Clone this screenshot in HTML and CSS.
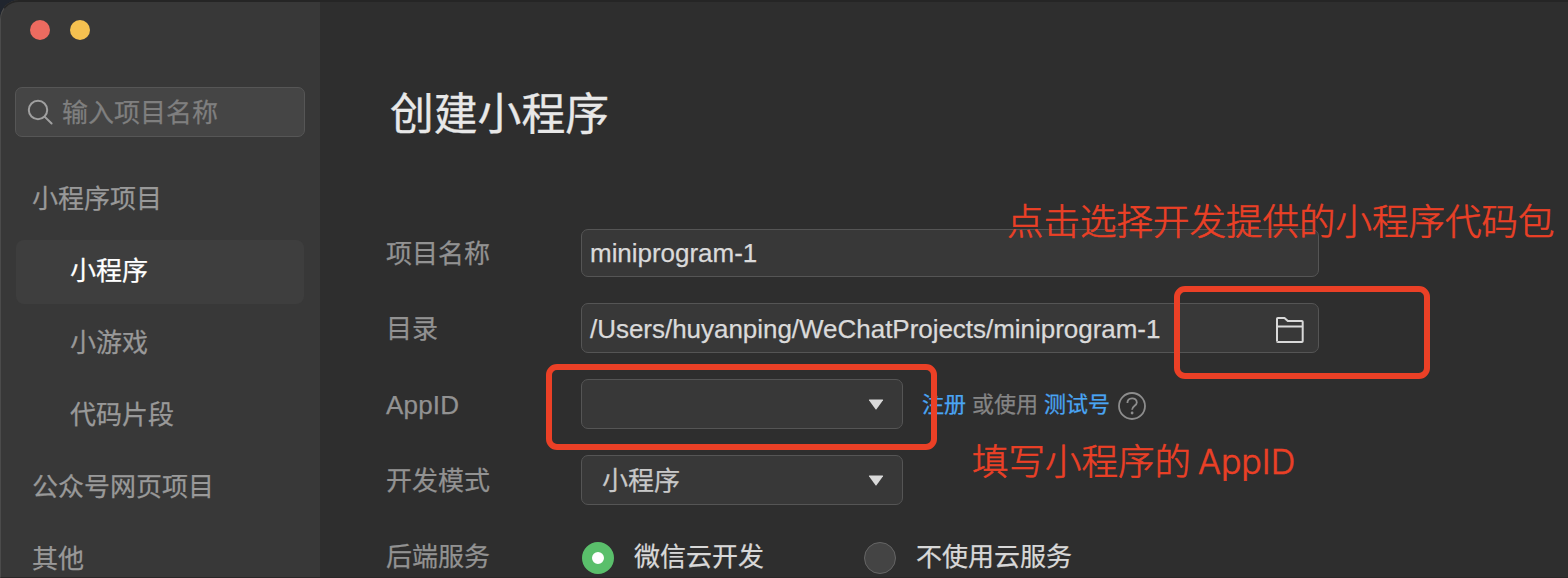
FILE: index.html
```html
<!DOCTYPE html>
<html lang="zh-CN">
<head>
<meta charset="utf-8">
<title>创建小程序</title>
<link rel="stylesheet" href="styles.css">
</head>
<body>
<div class="window">
  <aside class="sidebar">
    <div class="traffic"><span class="light close"></span><span class="light minimize"></span></div>
    <div class="search">
      <svg class="search-icon" width="28" height="28" viewBox="0 0 28 28"><circle cx="11" cy="12" r="9.2"/><path d="M17.6 18.6 24.6 25.5"/></svg>
      <span class="placeholder">输入项目名称</span>
    </div>
    <nav class="nav">
      <div class="nav-group">小程序项目</div>
      <div class="nav-item active">小程序</div>
      <div class="nav-item">小游戏</div>
      <div class="nav-item">代码片段</div>
      <div class="nav-group">公众号网页项目</div>
      <div class="nav-group">其他</div>
    </nav>
  </aside>
  <main class="main">
    <h1 class="title">创建小程序</h1>
    <div class="form">
      <div class="row name-row"><div class="label">项目名称</div><div class="field wide short"><span class="value">miniprogram-1</span></div></div>
      <div class="row"><div class="label">目录</div>
        <div class="field wide"><span class="value path">/Users/huyanping/WeChatProjects/miniprogram-1</span>
          <svg class="folder" width="30" height="28" viewBox="0 0 30 28"><path d="M2 25V2.8Q2 2 2.8 2H9.5L12.8 5H26.9Q27.7 5 27.7 5.8V25.2Q27.7 26 26.9 26H2.8Q2 26 2 25.2M2 10.6H27.7"/></svg>
        </div>
      </div>
      <div class="row"><div class="label latin">AppID</div>
        <div class="field select"><svg class="arrow" width="16" height="11" viewBox="0 0 16 11"><path d="M1.5.5h13q1 0 .5.8L8.5 10.3q-.5.6-1 0L1 1.3Q.5.5 1.5.5z"/></svg></div>
        <div class="hint"><a class="link">注册</a><span>或使用</span><a class="link">测试号</a>
          <svg class="help" width="28" height="28" viewBox="0 0 28 28"><circle cx="14" cy="14" r="13"/><path d="M9.4 11C9.4 4.9 18.8 4.9 18.8 10.4C18.8 13.7 14.1 13.9 14.1 17.8"/><circle class="dot" cx="14.1" cy="21" r="1.4"/></svg>
        </div>
      </div>
      <div class="row"><div class="label">开发模式</div>
        <div class="field select"><span class="mode">小程序</span><svg class="arrow" width="16" height="11" viewBox="0 0 16 11"><path d="M1.5.5h13q1 0 .5.8L8.5 10.3q-.5.6-1 0L1 1.3Q.5.5 1.5.5z"/></svg></div>
      </div>
      <div class="row"><div class="label">后端服务</div>
        <div class="option first"><span class="radio checked"></span><span>微信云开发</span></div>
        <div class="option"><span class="radio"></span><span>不使用云服务</span></div>
      </div>
    </div>
  </main>
  <div class="callout folder-callout"></div>
  <div class="callout appid-callout"></div>
  <div class="note folder-note">点击选择开发提供的小程序代码包</div>
  <div class="note appid-note">填写小程序的<span class="note-latin">AppID</span></div>
</div>
</body>
</html>
```
FILE: styles.css
```css
* { box-sizing: border-box; }
body {
  margin: 0;
  background: #20252e;
  font-family: "Liberation Sans", "Noto Sans CJK SC", sans-serif;
  font-size: 26px;
  line-height: 50px;
  overflow: hidden;
  -webkit-text-stroke: .25px;
}
.window {
  position: relative;
  display: flex;
  width: 1568px;
  height: 578px;
  overflow: hidden;
  white-space: nowrap;
  background: #2e2e2e;
  border-top-left-radius: 19px;
}
.window::after {
  content: "";
  position: absolute;
  inset: 0;
  border-top: 2px solid #252525;
  border-left: 1px solid #4b4b4b;
  border-bottom: 1px solid #292727;
  border-top-left-radius: 19px;
  pointer-events: none;
}
.sidebar {
  width: 320px;
  flex: none;
  padding: 20px 15px 0;
  background: #383838;
  color: #999;
}
.traffic { display: flex; gap: 20px; padding-left: 15px; }
.light { width: 20px; height: 20px; border-radius: 50%; }
.close { background: #ed6b60; }
.minimize { background: #f5c150; }
.search {
  display: flex;
  align-items: center;
  gap: 7px;
  width: 290px;
  height: 50px;
  margin-top: 47px;
  padding-left: 11px;
  border: 1px solid #565656;
  border-radius: 7px;
  background: #454545;
  color: #7f7f7f;
}
.search-icon { fill: none; stroke: #a0a0a0; stroke-width: 2; stroke-linecap: round; }
.placeholder { padding-top: 2px; }
.nav { padding: 31px 1px 0; }
.nav-group, .nav-item { height: 64px; line-height: 62px; margin-bottom: 8px; border-radius: 8px; }
.nav-group { padding-left: 16px; }
.nav-item { padding-left: 54px; }
.active { background: #3e3e3e; color: #fff; }
.main { flex: 1; padding: 82px 0 0 66px; }
.title {
  margin: 0;
  padding-left: 4px;
  color: #e8e8e8;
  font-size: 43.8px;
  font-weight: 400;
  line-height: 66px;
  -webkit-text-stroke: .35px;
}
.form { display: flex; flex-direction: column; gap: 26px; padding-top: 79px; }
.row { display: flex; align-items: flex-end; height: 50px; }
.label { width: 195px; color: #929292; line-height: 48px; }
.name-row .label { line-height: 46px; }
.latin { letter-spacing: .2px; }
.field {
  display: flex;
  align-items: center;
  justify-content: space-between;
  height: 50px;
  border: 1px solid #555;
  border-radius: 7px;
  background: #383838;
  color: #dadada;
}
.wide { width: 738px; padding: 0 13px 0 8px; }
.short { height: 48px; }
.value { letter-spacing: -.03px; }
.path { padding-top: 2px; }
.select { width: 322px; padding: 0 18px 0 20px; }
.folder { margin-top: 3px; fill: none; stroke: #d9d9d9; stroke-width: 2; stroke-linejoin: round; }
.arrow { margin-left: auto; fill: #d9d9d9; }
.mode { padding-top: 2px; color: #c8c8c8; }
.hint { display: flex; align-items: center; gap: 6px; height: 50px; margin-left: 19px; font-size: 22px; color: #858585; }
.hint span, .link { padding-top: 2px; }
.link { color: #4aa5f3; }
.help { margin: 4px 0 0 2px; fill: none; stroke: #8d8d8d; stroke-width: 1.8; }
.help .dot { fill: #8d8d8d; stroke: none; }
.option { display: flex; align-items: center; gap: 20px; height: 48px; padding-left: 1px; color: #d8d8d8; }
.first { width: 282px; }
.radio {
  width: 32px;
  height: 32px;
  margin-top: 2px;
  border: 1px solid #656565;
  border-radius: 50%;
  background: #444;
}
.checked { border: 10px solid #5abf6b; background: #fff; }
.callout { position: absolute; border: 6px solid #eb4026; border-radius: 11px; }
.folder-callout { left: 1174px; top: 286px; width: 256px; height: 93px; }
.appid-callout { left: 546px; top: 364px; width: 391px; height: 86px; }
.note {
  position: absolute;
  color: #eb4026;
  font-size: 36.5px;
  font-weight: 300;
  line-height: 50px;
  -webkit-text-stroke: .6px;
}
.folder-note { left: 1007px; top: 198px; }
.appid-note { left: 972px; top: 438px; }
.note-latin { position: relative; top: -1px; margin-left: 7px; font-family: Inter, sans-serif; font-size: 34px; }
```
